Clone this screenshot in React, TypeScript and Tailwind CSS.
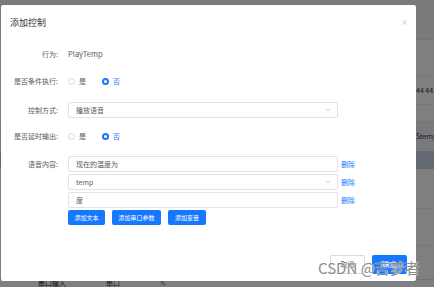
import React from 'react';

const font = { fontFamily: '"Noto Sans CJK SC", "Liberation Sans", sans-serif' };

function Radio({ checked, label }: { checked?: boolean; label: string }) {
    return (
        <div className="flex items-center">
            {checked ? (
                <span className="w-[7px] h-[7px] rounded-full bg-[#1677ff] flex items-center justify-center">
                    <span className="w-[3px] h-[3px] rounded-full bg-white" />
                </span>
            ) : (
                <span className="w-[7px] h-[7px] rounded-full border border-[#d9d9d9] bg-white" />
            )}
            <span className={`ml-[4px] text-[7px] leading-none ${checked ? 'text-[#1677ff]' : 'text-[#595959]'}`}>
                {label}
            </span>
        </div>
    );
}

function Chevron() {
    return (
        <svg width="6" height="4" viewBox="0 0 6 4" className="text-[#bfbfbf]">
            <path d="M0.5 0.5 L3 3 L5.5 0.5" fill="none" stroke="currentColor" strokeWidth="0.7" />
        </svg>
    );
}

function Field({ text, select }: { text: string; select?: boolean }) {
    return (
        <div className="flex items-center">
            <div className="w-[270px] h-[16px] border border-[#e3e3e3] rounded-[2px] bg-white flex items-center justify-between pl-[7px] pr-[6px]">
                <span className="text-[7px] text-[#595959] leading-none">{text}</span>
                {select && <Chevron />}
            </div>
            <span className="ml-[3px] text-[7px] text-[#1677ff] leading-none">删除</span>
        </div>
    );
}

function Label({ children }: { children: React.ReactNode }) {
    return <div className="w-[57px] shrink-0 text-right text-[7px] text-[#595959] leading-none">{children}</div>;
}

export default function App() {
    return (
        <div className="relative w-[434px] h-[287px] overflow-hidden bg-white" style={font}>
            {/* page behind the dialog */}
            <div className="flex flex-col">
                <div className="h-[40px] bg-[#f5f5f5] border-b border-[#e8e8e8]" />
                <div className="h-[37px] border-b border-[#ececec]" />
                <div className="h-[28px] border-b border-[#ececec] flex items-center justify-end">
                    <span className="text-[7px] text-[#333] w-[18px] overflow-hidden whitespace-nowrap">44 44</span>
                </div>
                <div className="h-[17px] border-b border-[#ececec]" />
                <div className="h-[29px] bg-[#eef3fb] flex items-center justify-end">
                    <span className="text-[7px] text-[#333] w-[18px] overflow-hidden whitespace-nowrap">Stemp</span>
                </div>
                <div className="h-[18px] bg-[#c9d3e3]" />
                <div className="h-[40px] border-b border-[#ececec]" />
                <div className="h-[37px] border-b border-[#ececec]" />
                <div className="h-[34px] border-b border-[#e0e0e0]" />
                <div className="h-[7px] flex items-end pl-[38px] gap-[40px]">
                    <span className="text-[7px] text-[#222] leading-none">串口输入</span>
                    <span className="text-[7px] text-[#444] leading-none">串口</span>
                    <span className="text-[7px] text-[#1677ff] leading-none">✎</span>
                </div>
            </div>

            {/* mask */}
            <div className="absolute inset-0 bg-black/50" />

            {/* dialog */}
            <div className="absolute left-[1px] top-[5px] w-[415px] h-[276px] bg-white rounded-[2px] flex flex-col">
                <div className="h-[34px] flex items-center justify-between pl-[9px] pr-[9px]">
                    <span className="text-[9px] text-[#333] leading-none">添加控制</span>
                    <svg width="5" height="5" viewBox="0 0 5 5">
                        <path d="M0.5 0.5 L4.5 4.5 M4.5 0.5 L0.5 4.5" stroke="#a6a6a6" strokeWidth="0.6" />
                    </svg>
                </div>

                <div className="flex flex-col pt-[7px]">
                    <div className="h-[16px] flex items-center">
                        <Label>行为:</Label>
                        <span className="ml-[10px] text-[7.5px] text-[#595959] leading-none">PlayTemp</span>
                    </div>

                    <div className="h-[16px] mt-[11px] flex items-center">
                        <Label>是否条件执行:</Label>
                        <div className="ml-[10px] flex items-center gap-[16px]">
                            <Radio label="是" />
                            <Radio checked label="否" />
                        </div>
                    </div>

                    <div className="h-[16px] mt-[13px] flex items-center">
                        <Label>控制方式:</Label>
                        <div className="ml-[10px] w-[270px] h-[16px] border border-[#e3e3e3] rounded-[2px] flex items-center justify-between pl-[7px] pr-[6px]">
                            <span className="text-[7px] text-[#595959] leading-none">播放语音</span>
                            <Chevron />
                        </div>
                    </div>

                    <div className="h-[16px] mt-[10px] flex items-center">
                        <Label>是否延时输出:</Label>
                        <div className="ml-[10px] flex items-center gap-[16px]">
                            <Radio label="是" />
                            <Radio checked label="否" />
                        </div>
                    </div>

                    <div className="mt-[12px] flex">
                        <div className="h-[16px] flex items-center">
                            <Label>语音内容:</Label>
                        </div>
                        <div className="ml-[10px] flex flex-col gap-[2px]">
                            <Field text="现在的温度为" />
                            <Field text="temp" select />
                            <Field text="度" />
                            <div className="flex gap-[7px]">
                                <button className="w-[37px] h-[15px] rounded-[2px] bg-[#1677ff] text-white text-[6px] leading-none">添加文本</button>
                                <button className="w-[49px] h-[15px] rounded-[2px] bg-[#1677ff] text-white text-[6px] leading-none">添加串口参数</button>
                                <button className="w-[38px] h-[15px] rounded-[2px] bg-[#1677ff] text-white text-[6px] leading-none">添加变量</button>
                            </div>
                        </div>
                    </div>
                </div>

                <div className="mt-auto mb-[7px] flex justify-end gap-[7px] pr-[9px]">
                    <button className="w-[35px] h-[19px] rounded-[2px] border border-[#d9d9d9] bg-white text-[7px] text-[#595959] leading-none">取消</button>
                    <button className="w-[35px] h-[19px] rounded-[2px] bg-[#1677ff] text-white text-[7px] leading-none">确定</button>
                </div>
            </div>

            {/* watermark */}
            <div
                className="absolute left-[318px] top-[260px] text-[15px] leading-none text-[#8c8c8c] whitespace-nowrap"
                style={{ textShadow: '0 0 1px #fff, 0 0 1px #fff' }}
            >
                CSDN @吉梦者
            </div>
        </div>
    );
}
